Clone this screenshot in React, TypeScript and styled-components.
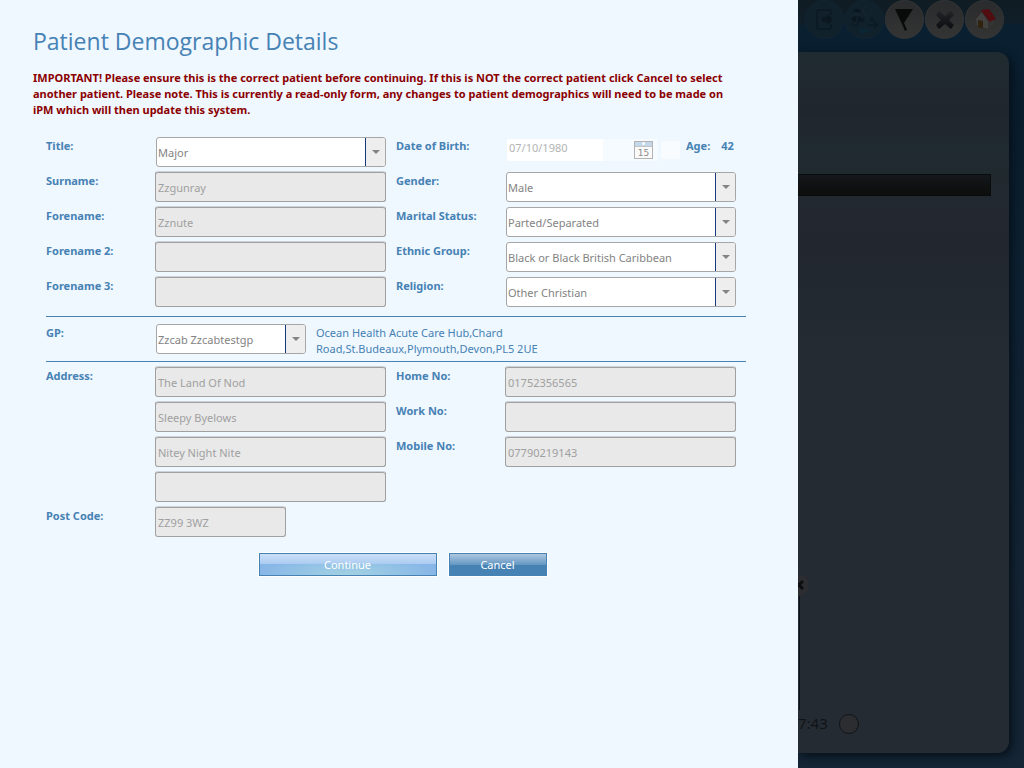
import React from "react";
import styled, { createGlobalStyle } from "styled-components";

const GlobalStyle = createGlobalStyle`
  * { box-sizing: border-box; }
  body { margin: 0; }
  body, input, select, button {
    font-family: "Noto Sans", "Open Sans", sans-serif;
    font-size: 11px;
    line-height: 16px;
  }
`;

const Page = styled.div`
  display: flex;
  min-height: 100vh;
`;

/* ---------- dialog ---------- */

const Dialog = styled.main`
  flex: 1;
  min-width: 0;
  padding: 23px 32px 24px 33px;
  background: #eff7ff;
  color: #4682b4;
`;

const Heading = styled.h1`
  margin: 0;
  font-family: "Open Sans", sans-serif;
  font-size: 23px;
  line-height: 36px;
  font-weight: 400;
`;

const Warning = styled.p`
  max-width: 713px;
  margin: 11px 0 0;
  color: #8b0000;
  font-weight: 700;
`;

const Form = styled.form`
  max-width: 713px;
  margin-top: 18px;
  padding-left: 13px;
`;

const Section = styled.div<{ $bottom?: number }>`
  display: grid;
  grid-template-columns: 109px 231px 10px 109px 231px;
  row-gap: 4px;
  padding-bottom: ${(p) => p.$bottom ?? 0}px;
`;

const Rule = styled.hr<{ $after: number }>`
  height: 1px;
  margin: 0 0 ${(p) => p.$after}px;
  border: 0;
  background: #4682b4;
`;

const Label = styled.label<{ $column?: number }>`
  grid-column: ${(p) => p.$column ?? 1};
  padding-top: 2px;
  font-weight: 700;
`;

const TextBox = styled.input<{ $column?: number; $short?: boolean }>`
  grid-column: ${(p) => p.$column ?? 2};
  width: ${(p) => (p.$short ? "131px" : "100%")};
  height: 31px;
  padding: 2px 2px 0;
  border: 1px solid #a0a0a0;
  border-top-color: #cdd2d8;
  border-radius: 3px;
  background: #e9e9e9;
  box-shadow: inset 0 1px #a0a0a0;
  color: #a0a0a0;
  opacity: 1;
`;

const SelectFrame = styled.div<{ $column?: number; $short?: boolean }>`
  grid-column: ${(p) => p.$column ?? 2};
  display: grid;
  grid-template-columns: 1fr 20px;
  width: ${(p) => (p.$short ? "150px" : "230px")};
  height: 30px;
  margin: 1px 0 0 1px;
  border: 1px solid #a6a6a6;
  border-radius: 3px;
  overflow: hidden;
  background: #fff;
`;

const SelectControl = styled.select`
  grid-area: 1 / 1 / 2 / 3;
  appearance: none;
  height: 28px;
  padding: 2px 22px 0 1px;
  border: 0;
  background: transparent;
  color: #838383;
  opacity: 1;
`;

const ArrowCell = styled.span`
  grid-area: 1 / 2;
  display: grid;
  place-items: center;
  border-left: 1px solid #153a7c;
  background: #eee;
  pointer-events: none;
`;

const DateGroup = styled.div`
  grid-column: 5;
  display: flex;
  align-items: center;
  height: 22px;
  margin: 3px 0 0 2px;
`;

const DateField = styled.div`
  display: flex;
  align-items: center;
  width: 151px;
  height: 22px;
  padding-right: 5px;
  background: #f5fbff;
`;

const DateInput = styled.input`
  width: 96px;
  height: 22px;
  margin-right: auto;
  padding: 0 2px 5px;
  border: 0;
  background: #fff;
  color: #b4b4b4;
`;

const CalendarButton = styled.button`
  display: block;
  width: 19px;
  height: 18px;
  padding: 0;
  border: 0;
  background: none;
`;

const DateExtra = styled.span`
  width: 19px;
  height: 18px;
  margin-left: 3px;
  background: #f8fcff;
`;

const Age = styled.span`
  display: flex;
  gap: 11px;
  margin: 0 0 8px 6px;
  font-weight: 700;
`;

const GpSection = styled.div`
  display: grid;
  grid-template-columns: 109px 151px 10px 250px;
  padding-bottom: 4px;
`;

const Practice = styled.p`
  grid-column: 4;
  margin: 2px 0 0;
`;

const Actions = styled.div`
  display: flex;
  justify-content: center;
  gap: 10px;
  margin: 15px 0 0 13px;
`;

const ActionButton = styled.button<{ $primary?: boolean }>`
  width: ${(p) => (p.$primary ? "180px" : "100px")};
  height: 25px;
  padding: 0;
  border: 1px solid #fff;
  background: ${(p) =>
    p.$primary
      ? "linear-gradient(#cfe1f9, #a9cbf1 50%, transparent 50%), radial-gradient(ellipse at 50% 100%, #a3d3e2, #86b5e8 75%)"
      : "linear-gradient(#b5cce2, #6699c4 50%, #4682b4 54%)"};
  box-shadow: inset 0 0 0 1px #4682b4;
  color: #fff;
`;

/* ---------- dimmed application behind the dialog ---------- */

const Behind = styled.aside`
  display: flex;
  flex-direction: column;
  flex: 0 0 226px;
  padding: 0 15px 15px 0;
  overflow: hidden;
  background: linear-gradient(#101c23 0, #0f1e29 24px, #0a2031 25px, #091d2d 110px, #0d2132 300px, #152434 600px, #152535 100%);
`;

const Toolbar = styled.nav`
  display: flex;
  justify-content: flex-end;
  gap: 1px;
  height: 52px;
  padding-right: 5px;
`;

const ToolButton = styled.button<{ $faded?: boolean }>`
  display: grid;
  place-items: center;
  width: 39px;
  height: 39px;
  padding: 0;
  border: 1px solid ${(p) => (p.$faded ? "#122532" : "#343637")};
  border-radius: 50%;
  background: ${(p) => (p.$faded ? "#10212c" : "linear-gradient(#292b2c, #343434)")};
`;

const Card = styled.section`
  display: flex;
  flex-direction: column;
  flex: 1;
  padding: 122px 0 19px;
  border-radius: 0 12px 12px 0;
  background: linear-gradient(#1f2b30 0, #20282f 40px, #21262e 60px, #1f2a30 100px, #20292e 120px, #232830 160px, #21262f 190px, #242b33 300px, #252b32 100%);
  box-shadow: 3px 3px 9px #06101a;
`;

const Bar = styled.div`
  height: 22px;
  margin-right: 18px;
  border: 1px solid #090b0c;
  border-left: 0;
  background: linear-gradient(#14191d, #0f1112 50%, #0d0e0d);
`;

const Handle = styled.div`
  display: flex;
  flex-direction: column;
  margin-top: auto;
`;

const Edge = styled.div`
  width: 2px;
  height: 114px;
  border-right: 1px solid #0b121b;
`;

const ClockRow = styled.div`
  display: flex;
  align-items: center;
  gap: 11px;
  margin-top: 3px;
  color: #111417;
  font-size: 15px;
  line-height: 21px;
`;

const Dial = styled.span`
  width: 20px;
  height: 20px;
  border: 1px solid #111417;
  border-radius: 50%;
  background: #2b2d31;
`;

function DropDown({ id, value, column, short }: { id: string; value: string; column?: number; short?: boolean }) {
  return (
    <SelectFrame $column={column} $short={short}>
      <SelectControl id={id} disabled defaultValue={value}>
        <option>{value}</option>
      </SelectControl>
      <ArrowCell>
        <svg width="8" height="4" viewBox="0 0 8 4" aria-hidden="true">
          <path d="M0 0h8L4 4z" fill="#838383" />
        </svg>
      </ArrowCell>
    </SelectFrame>
  );
}

function ExitIcon() {
  return (
    <svg width="19" height="21" viewBox="0 0 19 21" fill="none">
      <path d="M16 6V2.500Q16 1 14.500 1H3.500Q2 1 2 2.500v16Q2 20 3.500 20h11q1.500 0 1.500-1.500V15" stroke="#0b1820" strokeWidth="1.500" />
      <path d="M7 8h5V5l6 5.500-6 5.500v-3H7z" fill="#0b1820" />
    </svg>
  );
}

function PeopleIcon() {
  return (
    <svg width="30" height="30" viewBox="0 0 30 30" fill="none">
      <ellipse cx="17" cy="6" rx="4" ry="5" stroke="#17252e" />
      <path d="M14 12q-3 1-4 5h5zM20 12q4 1 5 5l-4-1z" fill="#0c1a23" />
      <path d="M2 7q3-4 7-3l2 4-4-1zM1 14q3-4 6-2l-2 5zM9 10l3 5-5 3z" fill="#0b171f" />
      <path d="M2 11q4-4 8 0M12 5l4 4M18 12l-3 5" stroke="#17252e" />
      <path d="M8 25l5-4v3h7v3h-7v3z" fill="#0b2533" />
      <path d="M29 20l-5-4v3h-6v2h6v3z" fill="#0b1b26" />
      <path d="M1 18l4 3 4-3" stroke="#0c1d28" strokeWidth="2" />
    </svg>
  );
}

function FlagIcon() {
  return (
    <svg width="20" height="24" viewBox="0 0 20 24">
      <path d="M0 1h18l-9 14 3 7-2 1L7 16z" fill="#090a0a" />
    </svg>
  );
}

function CrossIcon() {
  return (
    <svg width="20" height="20" viewBox="0 0 20 20">
      <defs>
        <linearGradient id="cross" x1="0" y1="0" x2="0" y2="1">
          <stop offset="0" stopColor="#222427" />
          <stop offset="1" stopColor="#0b0d10" />
        </linearGradient>
      </defs>
      <path d="M4 1l6 5 6-5 3 4-5 5 5 5-3 4-6-5-6 5-3-4 5-5-5-5z" fill="url(#cross)" />
    </svg>
  );
}

function HomeIcon() {
  return (
    <svg width="24" height="22" viewBox="0 0 24 22">
      <path d="M2 17l11 4 10-5-8-3z" fill="#2c3025" />
      <path d="M3 10l6-7 6 9v8L4 17z" fill="#414140" />
      <path d="M15 12l6-3v7l-6 4z" fill="#343434" />
      <path d="M5 11l5 1v7l-5-1z" fill="#31210f" />
      <path d="M8 1l8-1 7 10-7 3z" fill="#510d10" />
      <path d="M1 10l7-8 8 10" stroke="#35272a" strokeWidth="1" fill="none" />
    </svg>
  );
}

function CalendarIcon() {
  return (
    <svg width="19" height="18" viewBox="0 0 19 18">
      <rect x="0.500" y="0.500" width="18" height="17" fill="#fafafa" stroke="#b3b3b3" />
      <path d="M1 1h17v4H1z" fill="#c2d8ea" />
      <path d="M1 5.500h17" stroke="#c4c4c4" />
      <circle cx="9.500" cy="2.500" r="1.500" fill="#fff" />
      <text x="9.500" y="15" textAnchor="middle" fontFamily="DejaVu Sans" fontSize="9" fill="#8c8c8c">15</text>
    </svg>
  );
}

export default function App() {
  return (
    <Page>
      <GlobalStyle />
      <Dialog>
        <Heading>Patient Demographic Details</Heading>
        <Warning>
          IMPORTANT! Please ensure this is the correct patient before continuing. If this is NOT the correct patient click
          Cancel to select another patient. Please note. This is currently a read-only form, any changes to patient
          demographics will need to be made on iPM which will then update this system.
        </Warning>
        <Form onSubmit={(e) => e.preventDefault()}>
          <Section $bottom={9}>
            <Label htmlFor="title">Title:</Label>
            <DropDown id="title" value="Major" />
            <Label $column={4} htmlFor="dob">Date of Birth:</Label>
            <DateGroup>
              <DateField>
                <DateInput id="dob" disabled defaultValue="07/10/1980" />
                <CalendarButton type="button" disabled aria-label="Choose date"><CalendarIcon /></CalendarButton>
              </DateField>
              <DateExtra />
              <Age><span>Age:</span><span>42</span></Age>
            </DateGroup>

            <Label htmlFor="surname">Surname:</Label>
            <TextBox id="surname" disabled defaultValue="Zzgunray" />
            <Label $column={4} htmlFor="gender">Gender:</Label>
            <DropDown id="gender" column={5} value="Male" />

            <Label htmlFor="forename">Forename:</Label>
            <TextBox id="forename" disabled defaultValue="Zznute" />
            <Label $column={4} htmlFor="marital">Marital Status:</Label>
            <DropDown id="marital" column={5} value="Parted/Separated" />

            <Label htmlFor="forename2">Forename 2:</Label>
            <TextBox id="forename2" disabled />
            <Label $column={4} htmlFor="ethnic">Ethnic Group:</Label>
            <DropDown id="ethnic" column={5} value="Black or Black British Caribbean" />

            <Label htmlFor="forename3">Forename 3:</Label>
            <TextBox id="forename3" disabled />
            <Label $column={4} htmlFor="religion">Religion:</Label>
            <DropDown id="religion" column={5} value="Other Christian" />
          </Section>
          <Rule $after={6} />
          <GpSection>
            <Label htmlFor="gp">GP:</Label>
            <DropDown id="gp" value="Zzcab Zzcabtestgp" short />
            <Practice>Ocean Health Acute Care Hub,Chard Road,St.Budeaux,Plymouth,Devon,PL5 2UE</Practice>
          </GpSection>
          <Rule $after={4} />
          <Section>
            <Label htmlFor="address1">Address:</Label>
            <TextBox id="address1" disabled defaultValue="The Land Of Nod" />
            <Label $column={4} htmlFor="home">Home No:</Label>
            <TextBox $column={5} id="home" disabled defaultValue="01752356565" />

            <TextBox aria-label="Address line 2" disabled defaultValue="Sleepy Byelows" />
            <Label $column={4} htmlFor="work">Work No:</Label>
            <TextBox $column={5} id="work" disabled />

            <TextBox aria-label="Address line 3" disabled defaultValue="Nitey Night Nite" />
            <Label $column={4} htmlFor="mobile">Mobile No:</Label>
            <TextBox $column={5} id="mobile" disabled defaultValue="07790219143" />

            <TextBox aria-label="Address line 4" disabled />

            <Label htmlFor="postcode">Post Code:</Label>
            <TextBox id="postcode" $short disabled defaultValue="ZZ99 3WZ" />
          </Section>
          <Actions>
            <ActionButton $primary type="submit">Continue</ActionButton>
            <ActionButton type="button">Cancel</ActionButton>
          </Actions>
        </Form>
      </Dialog>
      <Behind>
        <Toolbar>
          <ToolButton $faded aria-label="Log out"><ExitIcon /></ToolButton>
          <ToolButton $faded aria-label="Switch user"><PeopleIcon /></ToolButton>
          <ToolButton aria-label="Flag"><FlagIcon /></ToolButton>
          <ToolButton aria-label="Close"><CrossIcon /></ToolButton>
          <ToolButton aria-label="Home"><HomeIcon /></ToolButton>
        </Toolbar>
        <Card>
          <Bar />
          <Handle>
            <svg width="12" height="22" viewBox="0 0 12 22" aria-hidden="true">
              <circle cx="0" cy="11" r="11" fill="#2b2d30" />
              <path d="M-3 7l8 8M5 7l-8 8" stroke="#0c0e10" strokeWidth="3" />
            </svg>
            <Edge />
          </Handle>
          <ClockRow>
            <span>7:43</span>
            <Dial />
          </ClockRow>
        </Card>
      </Behind>
    </Page>
  );
}
